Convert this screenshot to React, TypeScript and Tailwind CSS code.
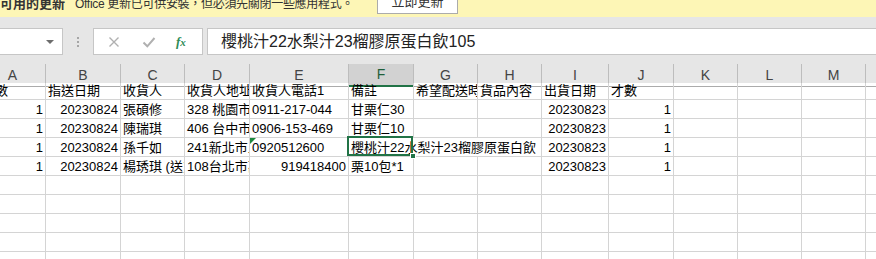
import React from "react";

const FONT = "font-['Liberation_Sans','Noto_Sans_CJK_TC',sans-serif]";

const COLS = ["A", "B", "C", "D", "E", "F", "G", "H", "I", "J", "K", "L", "M", "N"];

const GRID =
  "grid grid-cols-[66px_75px_64px_65px_99px_65px_64px_64px_67px_65px_64px_64px_64px_64px]";

const ROWS: string[][] = [
  ["件數", "指送日期", "收貨人", "收貨人地址", "收貨人電話1", "備註", "希望配送時段", "貨品內容", "出貨日期", "才數"],
  ["1", "20230824", "張碩修", "328 桃園市觀音區", "0911-217-044", "甘栗仁30", "", "", "20230823", "1"],
  ["1", "20230824", "陳瑞琪", "406 台中市北屯區", "0906-153-469", "甘栗仁10", "", "", "20230823", "1"],
  ["1", "20230824", "孫千如", "241新北市三重區", "0920512600", "櫻桃汁22水梨汁23榴膠原蛋白飲105", "", "", "20230823", "1"],
  ["1", "20230824", "楊琇琪 (送貨地址)", "108台北市萬華區", "919418400", "栗10包*1", "", "", "20230823", "1"],
];

const isNumber = (v: string) => /^[1-9]\d*$/.test(v);

function Cell({ value, row, col }: { value: string; row: number; col: number }) {
  const selected = row === 3 && col === 5;
  // G and H of the selected row are covered by F's overflowing text
  const spill = row === 3 && (col === 5 || col === 6);
  return (
    <div
      className={`relative flex h-full items-end border-b border-[#d4d4d4] ${
        spill ? "border-r-0 pr-px" : "border-r"
      } ${isNumber(value) ? "justify-end pr-[2px]" : "pl-[2px]"} ${
        selected ? "overflow-visible" : "overflow-hidden"
      }`}
    >
      {selected ? (
        <>
          <span className="absolute bottom-[2px] left-[2px] z-10 w-[185px] overflow-hidden whitespace-nowrap leading-none">
            {value}
          </span>
          <div className="absolute -left-[2px] -top-[2px] right-[1px] bottom-0 z-20 border-2 border-[#217346]" />
          <div className="absolute -bottom-[3px] -right-[2px] z-30 h-[6px] w-[6px] border border-white bg-[#217346]" />
        </>
      ) : (
        <span className="whitespace-nowrap pb-[2px] leading-none">{value}</span>
      )}
      {row === 3 && col === 4 && (
        <div className="absolute left-0 top-0 h-0 w-0 border-r-[6px] border-t-[6px] border-r-transparent border-t-[#1e8a3f]" />
      )}
    </div>
  );
}

export default function App() {
  return (
    <div className={`h-[259px] w-[876px] overflow-hidden bg-white text-black ${FONT}`}>
      {/* Update banner */}
      <div className="flex h-[17px] items-start overflow-hidden bg-[#fdf6b6] text-[#333]">
        <div className="-mt-[6px] flex w-[377px] items-start whitespace-nowrap text-[12px]">
          <span className="text-[13px] font-bold">可用的更新</span>
          <span className="ml-[10px] mt-[1px] tracking-[-0.3px]">Office 更新已可供安裝，但必須先關閉一些應用程式。</span>
        </div>
        <div className="-mt-[10px] flex h-[24px] w-[81px] items-end justify-center border border-[#ababab] bg-white pb-[2px] text-[13px]">
          立即更新
        </div>
      </div>

      {/* Formula bar */}
      <div className="h-[47px] bg-[#e6e6e6] pt-[11px]">
        <div className="flex h-[27px] items-stretch">
          <div className="flex w-[63px] items-center justify-end border border-l-0 border-[#c6c6c6] bg-white pr-[8px]">
            <div className="h-0 w-0 border-x-[4px] border-t-[4px] border-x-transparent border-t-[#6d6d6d]" />
          </div>
          <div className="flex w-[30px] flex-col items-center justify-center gap-[2px]">
            <div className="h-[2px] w-[2px] bg-[#a6a6a6]" />
            <div className="h-[2px] w-[2px] bg-[#a6a6a6]" />
            <div className="h-[2px] w-[2px] bg-[#a6a6a6]" />
          </div>
          <div className="flex w-[110px] items-center border border-[#c6c6c6] bg-white">
            <svg className="ml-[14px]" width="12" height="12" viewBox="0 0 12 12">
              <path d="M1.5 1.5l9 9M10.5 1.5l-9 9" stroke="#b0b0b0" strokeWidth="1.4" fill="none" />
            </svg>
            <svg className="ml-[22px]" width="14" height="12" viewBox="0 0 14 12">
              <path d="M1.5 6.5l3.8 3.8L12.5 2" stroke="#b0b0b0" strokeWidth="2" fill="none" />
            </svg>
            <span className="ml-[20px] font-['Liberation_Serif',serif] text-[13px] font-bold italic text-[#2e8b57]">
              f<span className="text-[11px]">x</span>
            </span>
          </div>
          <div className="ml-[4px] flex flex-1 items-center border border-r-0 border-[#c6c6c6] bg-white pl-[13px] text-[16px] text-[#222]">
            櫻桃汁22水梨汁23榴膠原蛋白飲105
          </div>
        </div>
      </div>

      {/* Sheet */}
      <div className="-ml-[20px] w-[916px]">
        <div className={`${GRID} h-[19px] bg-[#e6e6e6] text-[14px] text-[#444]`}>
          {COLS.map((c) => (
            <div
              key={c}
              className={`flex items-center justify-center border-r border-[#bdbdbd] ${
                c === "F"
                  ? "border-b-2 border-b-[#217346] bg-[#d2d2d2] text-[#1f5f3a]"
                  : "border-b border-b-[#ababab]"
              }`}
            >
              {c}
            </div>
          ))}
        </div>

        {Array.from({ length: 10 }).map((_, r) => {
          const data = ROWS[r] || [];
          return (
            <div key={r} className={`${GRID} text-[13px] ${r === 0 ? "h-[17px]" : "h-[19px]"}`}>
              {COLS.map((c, ci) => (
                <Cell key={c} value={data[ci] || ""} row={r} col={ci} />
              ))}
            </div>
          );
        })}
      </div>
    </div>
  );
}
